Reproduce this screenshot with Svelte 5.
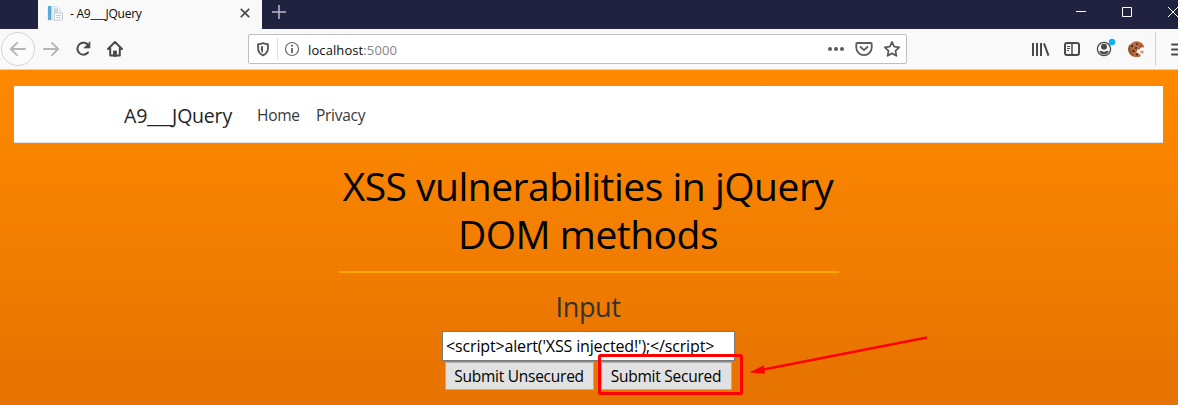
<script>
  let value = $state("<script>alert('XSS injected!');<\/script>");
</script>

<div class="window">
  <div class="titlebar">
    <div class="tab">
      <svg class="fav" width="17" height="17" viewBox="0 0 17 17">
        <path d="M1 1.500h10l3 4V15H1z" fill="#edf1f4" stroke="#d3dce4" stroke-width=".7" />
        <path d="M1 1h3.500v14H1z" fill="#5aa9d9" />
        <path d="M4 1h1.300v14H4z" fill="#b8d9ee" />
        <path d="M7 3.500h4v4H7z" fill="#cbd8e2" />
        <path d="M7.500 8h8v7h-8z" fill="#fff" stroke="#bcc6cf" stroke-width=".9" />
        <path d="M9 10.500h5M9 12.500h5" stroke="#b3bec8" stroke-width=".8" />
      </svg>
      <span class="tabtitle">- A9___JQuery</span>
      <svg class="close" width="10" height="10" viewBox="0 0 10 10"><path d="M.8.8l8.400 8.400M9.200.8L.8 9.200" stroke="#4a4a4c" stroke-width="1.700" /></svg>
    </div>
    <svg class="plus" width="14" height="14" viewBox="0 0 14 14"><path d="M7 0v14M0 7h14" stroke="#b9bac6" stroke-width="1.500" /></svg>
    <svg class="controls" width="104" height="28" viewBox="0 0 104 28" fill="none" stroke="#fff">
      <path d="M2 11.500h10M94 7l10 10M104 7l-10 10" />
      <path d="M48.500 7.500h9v9h-9z" />
    </svg>
  </div>

  <div class="toolbar">
    <svg class="nav" width="130" height="40" viewBox="0 0 130 40" fill="none" stroke-linecap="round" stroke-linejoin="round">
      <circle cx="18" cy="20" r="16.500" fill="#fbfbfb" stroke="#d4d4d4" />
      <path d="M25 20H11M17 13.800l-6.200 6.200 6.200 6.200" stroke="#b5b5b6" stroke-width="1.900" />
      <path d="M44 20h14M52 13.800l6.200 6.200-6.200 6.200" stroke="#b5b5b6" stroke-width="1.900" />
      <path d="M88.500 16.500A6 6 0 1 0 88 23.500" stroke="#4a4a4b" stroke-width="2" />
      <path d="M90 13v6h-6z" fill="#4a4a4b" stroke="#4a4a4b" stroke-width=".6" />
      <path d="M108 20l7-7 7 7M110.200 19v7.500h9.600V19" stroke="#4a4a4b" stroke-width="2" />
      <path d="M113.500 27v-5h3v5z" fill="#4a4a4b" stroke="#4a4a4b" stroke-width=".8" />
    </svg>

    <div class="urlbar">
      <svg class="idicons" width="58" height="28" viewBox="0 0 58 28" fill="none">
        <path d="M14 8.200c1.800.9 3.300 1 4.900 1v4c0 3.500-1.900 5.700-4.900 7.200-3-1.500-4.900-3.700-4.900-7.200v-4c1.600 0 3.100-.1 4.900-1z" stroke="#58585a" stroke-width="1.900" stroke-linejoin="round" />
        <path d="M14 11v7c-1.500-1-2.200-2.300-2.200-4.500v-2z" fill="#58585a" />
        <path d="M28.500 3v22" stroke="#dededf" />
        <circle cx="43" cy="14" r="6.500" stroke="#6b6b6d" stroke-width="1.200" />
        <path d="M43 13v5" stroke="#58585a" stroke-width="1.700" />
        <circle cx="43" cy="10.700" r="1.050" fill="#58585a" />
      </svg>
      <span class="host">localhost<span class="port">:5000</span></span>
      <svg class="urlactions" width="82" height="28" viewBox="0 0 82 28" fill="none" stroke="#5c5c5e" stroke-width="1.800" stroke-linejoin="round" stroke-linecap="round">
        <g fill="#5c5c5e" stroke="none"><circle cx="6" cy="14" r="2" /><circle cx="12" cy="14" r="2" /><circle cx="18" cy="14" r="2" /></g>
        <path d="M33.200 8h13.600q.9 0 .9.900v3.600a7.200 7.200 0 0 1-15.400 0V8.900q0-.9.900-.9z" />
        <path d="M36.500 12l3.500 3.200 3.500-3.200" />
        <path d="M68 7l2.200 4.600 5 .7-3.700 3.500.9 5-4.400-2.400-4.400 2.400.9-5-3.700-3.500 5-.7z" />
      </svg>
    </div>

    <svg class="tools" width="152" height="40" viewBox="0 0 152 40" fill="none">
      <path d="M7 14v13M11 14v13M15 14v13" stroke="#4a4a4b" stroke-width="2" />
      <path d="M18 14.300l4.500 12.400" stroke="#4a4a4b" stroke-width="2" />
      <rect x="39" y="14" width="14" height="12" rx="2" stroke="#4a4a4b" stroke-width="2" />
      <path d="M46 14v12" stroke="#4a4a4b" stroke-width="1.500" />
      <path d="M41 17.500h3M41 19.500h3M41 21.500h2" stroke="#4a4a4b" />
      <circle cx="78" cy="20" r="6.600" stroke="#4a4a4b" stroke-width="1.300" />
      <circle cx="78" cy="17.800" r="3" fill="#4a4a4b" />
      <path d="M73.200 22q1.800-.8 3 .2 1.800 1.200 3.600 0 1.200-1 3-.2-1.500 3.500-4.800 3.500t-4.800-3.500z" fill="#4a4a4b" />
      <circle cx="86" cy="13" r="3.200" fill="#08b3f5" />
      <path d="M116 14.200a8 8 0 1 0-1 12.800l-1.500-2-3-1.500 1-3 2.500 0 .3-1.800 4-.4a8 8 0 0 0-2.300-4.100z" fill="#b86b3c" />
      <path d="M104 15a7.800 7.800 0 0 0 4 12.700q-4-5-4-12.700z" fill="#95502a" />
      <path d="M114 22.500l2-1.300 2 1.800-1 1.500-2.500-.2z" fill="#d99a68" />
      <g fill="#4b2a27"><circle cx="106" cy="17" r="1.200" /><circle cx="111" cy="15" r="1.100" /><circle cx="107.500" cy="22" r="1.200" /><circle cx="110" cy="19" r="1" /><circle cx="111" cy="25.500" r="1.100" /><circle cx="114.500" cy="17" r=".8" /></g>
      <path d="M129.500 3v34" stroke="#d3d3d4" />
      <path d="M146 15.500h10M146 20.500h10M146 25.500h10" stroke="#4a4a4b" stroke-width="2" stroke-linecap="round" />
    </svg>
  </div>

  <div class="page">
    <header>
      <span class="brand">A9___JQuery</span>
      <span class="link home">Home</span>
      <span class="link privacy">Privacy</span>
    </header>
    <main>
      <h1><span>XSS vulnerabilities in jQuery</span><span>DOM methods</span></h1>
      <hr />
      <h3>Input</h3>
      <input type="text" bind:value spellcheck="false" />
      <div class="buttons">
        <button class="unsec">Submit Unsecured</button>
        <button class="sec">Submit Secured</button>
      </div>
    </main>
    <svg class="marks" width="1178" height="335" viewBox="0 70 1178 335" fill="none">
      <rect x="599.500" y="355.500" width="142" height="38" rx="1" stroke="#f00" stroke-width="3" />
      <path d="M927 337.500L762 369.800" stroke="#f00" stroke-width="2.700" />
      <path d="M749.500 372.500l14.200-7.300 1.300 8.600z" fill="#f00" />
    </svg>
  </div>
</div>

<style>
  :global(body) { margin: 0; overflow: hidden; }
  .window { width: 1178px; height: 405px; overflow: hidden; font-family: "Open Sans", "Noto Sans", sans-serif; }
  svg { display: block; flex: none; }
  .titlebar { height: 29px; background: #20223f; display: flex; }
  .tab { width: 224px; height: 29px; margin-left: 38px; background: #f9f9fa; display: flex; box-sizing: border-box; padding-left: 9px; }
  .fav { margin-top: 5px; }
  .tabtitle { font-size: 12px; line-height: 28px; margin-left: 6px; width: 170px; color: #0c0c0d; letter-spacing: -0.24px; white-space: pre; }
  .close { margin-top: 8px; }
  .plus { margin: 5px 0 0 10px; }
  .controls { margin-left: auto; }
  .toolbar { height: 41px; background: #f9f9fa; display: flex; box-sizing: border-box; border-bottom: 1px solid #d2d2d3; }
  .urlbar { box-sizing: border-box; width: 659px; height: 30px; margin: 5px 0 0 118px; border: 1px solid #bfbfc0; border-radius: 2px; background: #fff; display: flex; }
  .host { font-size: 13px; line-height: 30px; margin-left: 1px; color: #0c0c0d; letter-spacing: 0.1px; }
  .port { color: #858586; }
  .urlactions { margin-left: auto; }
  .tools { margin-left: 119px; }
  .page { position: relative; height: 335px; background: linear-gradient(#ff8a00, #e67200); padding-top: 16px; box-sizing: border-box; }
  header { height: 57px; margin: 0 15px 0 14px; box-sizing: border-box; background: #fff; border-bottom: 1px solid #dee2e6; display: flex; align-items: center; padding: 2px 0 0 110px; white-space: pre; }
  .brand { font-size: 19.5px; color: #212529; width: 133px; letter-spacing: -0.2px; }
  .link { font-size: 15.5px; color: #343a40; letter-spacing: -0.28px; }
  .home { width: 59px; }
  main { width: 500px; margin: 19px 0 0 339px; display: flex; flex-direction: column; align-items: center; }
  h1 { margin: 0 2px 0 0; font-weight: 400; font-size: 39px; line-height: 48px; color: #000; text-align: center; white-space: nowrap; letter-spacing: -0.5px; }
  h1 span { display: block; }
  hr { width: 500px; height: 2px; border: 0; margin: 13px 0 17px; background: #ffa600; }
  h3 { margin: 0 2px 0 0; font-weight: 400; font-size: 27px; line-height: 34px; color: #333; letter-spacing: -0.4px; }
  input { box-sizing: border-box; width: 293px; height: 30px; margin: 7px 1px 0 0; border: 1px solid #7a7a7a; padding: 1px 3px; font: 16px "Open Sans", sans-serif; color: #000; letter-spacing: -0.15px; border-radius: 0; background: #fff; }
  .buttons { display: flex; gap: 7px; margin: 1px 2px 0 0; }
  button { box-sizing: border-box; height: 28px; border: 1px solid #adadad; background: #e1e1e1; border-radius: 0; padding: 0; font: 15.5px "Open Sans", sans-serif; color: #000; letter-spacing: -0.25px; white-space: nowrap; }
  .unsec { width: 149px; }
  .sec { width: 131px; }
  .marks { position: absolute; left: 0; top: 0; pointer-events: none; }
</style>
